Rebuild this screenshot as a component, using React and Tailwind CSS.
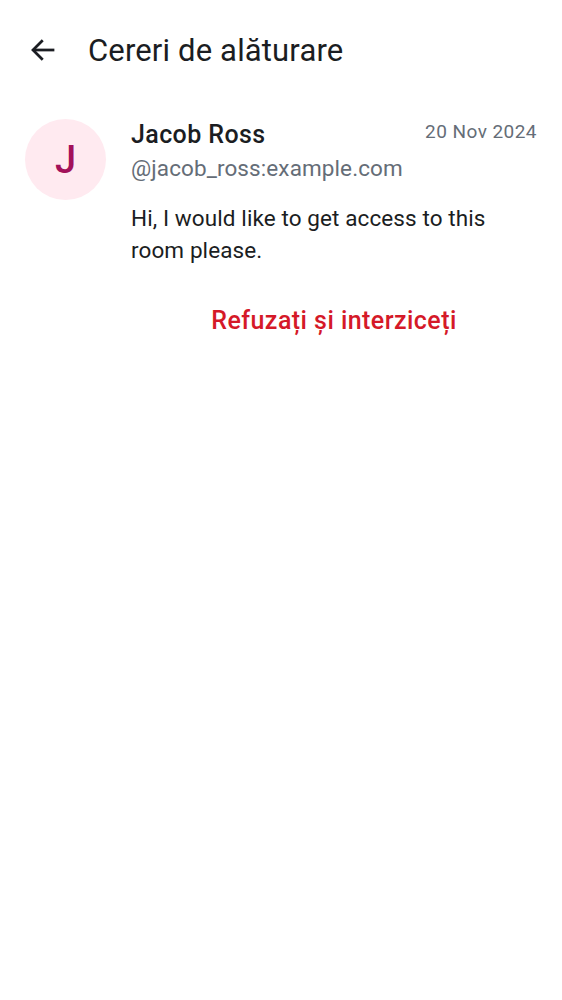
export default function App() {
	return (
		<main className="w-full min-h-screen bg-white font-['Roboto',sans-serif] text-[#1b1d22]">
			{/* TOP BAR */}
			<div className="h-[100px] flex items-center pl-[28px]">
				<svg width="30" height="30" viewBox="0 0 24 24" fill="none" stroke="#1b1d22" strokeWidth="2.2" strokeLinecap="square">
					<path d="M20 12H5" />
					<path d="M11 5l-7 7 7 7" />
				</svg>
				<p className="ml-[30px] text-[31px] leading-none tracking-[0.15px]">Cereri de alăturare</p>
			</div>

			{/* REQUEST */}
			<div className="flex pl-[25px] pr-[25px] pt-[19px]">
				<div className="w-[81px] h-[81px] shrink-0 rounded-full bg-[#ffeaf0] flex items-center justify-center">
					<span className="text-[#a3115a] text-[38px] font-medium leading-none">J</span>
				</div>
				<div className="ml-[25px] grow">
					<div className="flex justify-between items-start">
						<p className="text-[25px] font-medium leading-[32px] tracking-[0.4px]">Jacob Ross</p>
						<p className="text-[19px] text-[#656d77] leading-[24px] pt-[1px] tracking-[0.45px]">20 Nov 2024</p>
					</div>
					<p className="text-[22.5px] text-[#656d77] leading-[32px] mt-[1px] tracking-[0.1px]">@jacob_ross:example.com</p>
					<p className="text-[22.5px] leading-[32px] mt-[18px] tracking-[0.1px]">Hi, I would like to get access to this room please.</p>
					<div className="flex justify-center mt-[35px]">
						<button className="text-[#d51928] text-[25px] font-medium leading-[40px] tracking-[0.45px]">Refuzați și interziceți</button>
					</div>
				</div>
			</div>
		</main>
	);
}
